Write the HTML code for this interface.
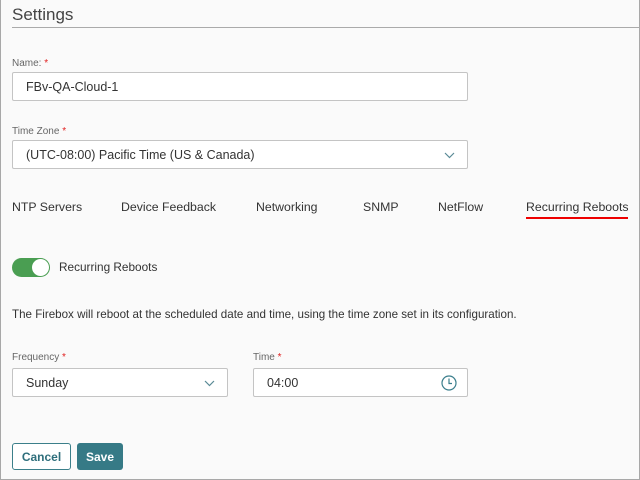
<!DOCTYPE html>
<html><head><style>
*{box-sizing:border-box;margin:0;padding:0}
body{width:640px;height:480px;background:#fafafa;font-family:"Liberation Sans",sans-serif;color:#333;position:relative;overflow:hidden}
.frame{position:absolute;left:0;top:0;width:640px;height:480px;border:1px solid #a8a8a8;border-top:none}
.a{position:absolute;white-space:nowrap}
.lbl{font-size:10px;color:#666}
.st{color:#e02020}
.inp{position:absolute;background:#fff;border:1px solid #c4c4c4;border-radius:2px;font-size:12.5px;color:#333;padding-left:13px;display:flex;align-items:center}
.tab{font-size:12.3px;color:#333;top:200px}
</style></head><body>
<div class="frame"></div>
<div class="a" style="left:12px;top:5px;font-size:17px;color:#444">Settings</div>
<div class="a" style="left:12px;top:27px;width:628px;height:1px;background:#aaa"></div>
<div class="a lbl" style="left:12px;top:58px">Name: <span class="st">*</span></div>
<div class="inp" style="left:12px;top:72px;width:456px;height:29px">FBv-QA-Cloud-1</div>
<div class="a lbl" style="left:12px;top:126px">Time Zone <span class="st">*</span></div>
<div class="inp" style="left:12px;top:140px;width:456px;height:29px">(UTC-08:00) Pacific Time (US &amp; Canada)
<svg style="position:absolute;right:12px;top:11px" width="11" height="7" viewBox="0 0 11 7"><path d="M1 1l4.5 4.5L10 1" fill="none" stroke="#5a8a96" stroke-width="1.2"/></svg></div>
<div class="a tab" style="left:12px">NTP Servers</div>
<div class="a tab" style="left:121px">Device Feedback</div>
<div class="a tab" style="left:256px">Networking</div>
<div class="a tab" style="left:363px">SNMP</div>
<div class="a tab" style="left:438px">NetFlow</div>
<div class="a tab" style="left:526px">Recurring Reboots</div>
<div class="a" style="left:526px;top:217px;width:102px;height:2px;background:#e00"></div>
<div class="a" style="left:12px;top:258px;width:38px;height:19px;border-radius:10px;background:#4a9e52"></div>
<div class="a" style="left:32px;top:259px;width:17px;height:17px;border-radius:50%;background:#fff"></div>
<div class="a" style="left:59px;top:260px;font-size:11.8px">Recurring Reboots</div>
<div class="a" style="left:12px;top:308px;font-size:11.6px">The Firebox will reboot at the scheduled date and time, using the time zone set in its configuration.</div>
<div class="a lbl" style="left:12px;top:352px">Frequency <span class="st">*</span></div>
<div class="inp" style="left:12px;top:368px;width:216px;height:29px">Sunday
<svg style="position:absolute;right:12px;top:11px" width="11" height="7" viewBox="0 0 11 7"><path d="M1 1l4.5 4.5L10 1" fill="none" stroke="#5a8a96" stroke-width="1.2"/></svg></div>
<div class="a lbl" style="left:253px;top:352px">Time <span class="st">*</span></div>
<div class="inp" style="left:253px;top:368px;width:215px;height:29px">04:00
<svg style="position:absolute;right:10px;top:6px" width="16" height="16" viewBox="0 0 16 16"><circle cx="8" cy="8" r="7" fill="none" stroke="#3a7e8c" stroke-width="1.2"/><path d="M8 3.5V8.5H11" fill="none" stroke="#3a7e8c" stroke-width="1.2"/></svg></div>
<div class="a" style="left:12px;top:443px;width:59px;height:27px;border:1px solid #3b7f8a;border-radius:3px;background:#fff;color:#2f6f7c;font-size:12px;font-weight:bold;display:flex;align-items:center;justify-content:center">Cancel</div>
<div class="a" style="left:77px;top:443px;width:46px;height:27px;border-radius:3px;background:#367a86;color:#fff;font-size:12px;font-weight:bold;display:flex;align-items:center;justify-content:center">Save</div>
</body></html>
